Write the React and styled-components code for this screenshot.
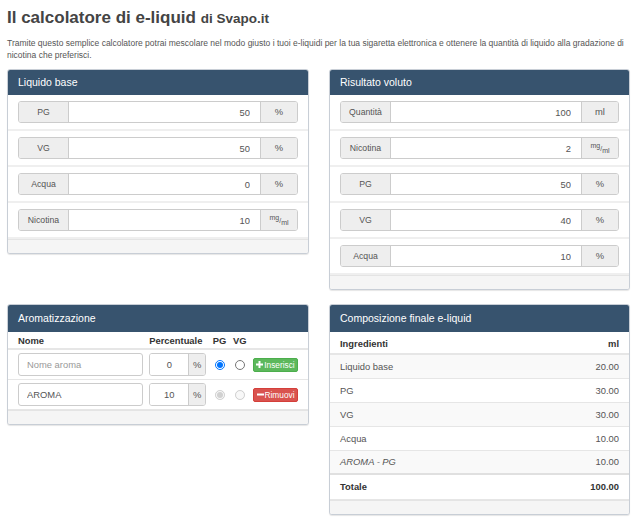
import React from "react";
import styled, { createGlobalStyle } from "styled-components";

const GlobalStyle = createGlobalStyle`
  html, body {
    margin: 0;
    padding: 0;
    background: #fff;
  }
  body {
    font-family: "Liberation Sans", Arial, sans-serif;
    font-size: 9.4px;
    line-height: 1.42857;
    color: #555;
  }
  * {
    box-sizing: border-box;
  }
`;

const Page = styled.div`
  padding: 8px 10px 8px 7px;
`;

const Title = styled.h2`
  margin: 0 0 8px 0;
  font-size: 17px;
  line-height: 20px;
  font-weight: bold;
  color: #444;

  small {
    font-size: 13.5px;
    color: #444;
  }
`;

const Intro = styled.p`
  margin: 0 0 8px 0;
  font-size: 8.5px;
  line-height: 12px;
  color: #555;
`;

const Grid = styled.div`
  display: grid;
  grid-template-columns: 302px 301px;
  column-gap: 20px;
  row-gap: 14px;
  align-items: start;
`;

const Panel = styled.div`
  border: 1px solid #c8ced6;
  border-radius: 3px;
  background: #fff;
  box-shadow: 0 1px 1px rgba(0, 0, 0, 0.1);
  overflow: hidden;
`;

const PanelHeading = styled.div`
  background: #37536e;
  color: #fff;
  font-size: 10.5px;
  height: ${(p) => (p.$tall ? "27px" : "25px")};
  display: flex;
  align-items: center;
  padding: 0 10px;
`;

const PanelFooter = styled.div`
  height: 14px;
  background: #f5f5f5;
  border-top: 1px solid #e4e4e4;
`;

const Row = styled.div`
  padding: 6px 10px;
  border-bottom: 2px solid #efefef;
`;

const InputGroup = styled.div`
  display: flex;
  height: 22px;
  border: 1px solid #ccc;
  border-radius: 3px;
  overflow: hidden;
`;

const Addon = styled.span`
  flex: 0 0 ${(p) => p.$w}px;
  display: flex;
  align-items: center;
  justify-content: center;
  background: #eee;
  color: #555;
  font-size: ${(p) => (p.$small ? "8.7px" : "9.4px")};
  border-left: ${(p) => (p.$right ? "1px solid #ccc" : "none")};
  border-right: ${(p) => (p.$right ? "none" : "1px solid #ccc")};
`;

const Unit = styled.span`
  font-size: 7px;
  line-height: 1;
  white-space: nowrap;

  sup {
    vertical-align: 3px;
    font-size: 7px;
  }
  sub {
    vertical-align: -2px;
    font-size: 7px;
  }
`;

const ValueField = styled.input`
  flex: 1;
  min-width: 0;
  border: none;
  outline: none;
  padding: 0 10px;
  font-family: inherit;
  font-size: 9.4px;
  color: #555;
  text-align: ${(p) => p.$align || "right"};
  background: #fff;
`;

const AromaGrid = styled.div`
  display: grid;
  grid-template-columns: 125px 57px 14px 14px 45px;
  justify-content: space-between;
  align-items: center;
  padding: ${(p) => (p.$head ? "1px 10px 0" : "3px 10px")};
  height: ${(p) => (p.$head ? "18px" : "30px")};
  border-bottom: ${(p) => (p.$head ? "2px solid #e6e6e6" : "1px solid #e6e6e6")};
  &:last-of-type {
    border-bottom: none;
  }
`;

const HeadLabel = styled.span`
  font-weight: bold;
  color: #333;
  white-space: nowrap;
  justify-self: ${(p) => (p.$center ? "center" : "start")};
`;

const NameField = styled.input`
  width: 125px;
  height: 23px;
  border: 1px solid #ccc;
  border-radius: 3px;
  padding: 0 8px;
  font-family: inherit;
  font-size: 9.4px;
  color: #555;
  outline: none;

  &::placeholder {
    color: #999;
  }
`;

const SmallGroup = styled(InputGroup)`
  width: 57px;
  height: 23px;
`;

const Radio = styled.input.attrs({ type: "radio" })`
  width: 10px;
  height: 10px;
  margin: 0;
  justify-self: center;
`;

const Button = styled.button`
  display: inline-flex;
  align-items: center;
  justify-content: center;
  gap: 1px;
  width: 45px;
  height: 14px;
  padding: 0 1px;
  border: 1px solid ${(p) => (p.$danger ? "#d43f3a" : "#4cae4c")};
  border-radius: 2px;
  background: ${(p) => (p.$danger ? "#d9534f" : "#5cb85c")};
  color: #fff;
  font-family: inherit;
  font-size: 8.3px;
  white-space: nowrap;
  cursor: pointer;

  svg {
    width: 7px;
    height: 7px;
    flex: 0 0 7px;
  }
`;

const ResultTable = styled.table`
  width: 100%;
  border-collapse: collapse;

  th,
  td {
    padding: 0 10px;
    height: 24px;
    line-height: 13px;
  }
  thead th {
    border-bottom: 2px solid #e6e6e6;
    color: #333;
    height: 22px;
    padding-top: 1px;
  }
  tbody tr {
    border-top: 1px solid #e6e6e6;
  }
  tbody tr:first-child {
    border-top: none;
  }
  tbody tr:nth-child(odd) {
    background: #f9f9f9;
  }
`;

const Cell = styled.td`
  text-align: ${(p) => (p.$num ? "right" : "left")};
  font-style: ${(p) => (p.$italic ? "italic" : "normal")};
`;

const HeadCell = styled.th`
  text-align: ${(p) => (p.$num ? "right" : "left")};
  font-weight: bold;
`;

const TotalRow = styled.tr`
  && {
    background: #fff;
    border-top: 2px solid #e0e0e0;
    border-bottom: 1px solid #e6e6e6;
  }
  && td {
    font-weight: bold;
    color: #333;
    height: 25px;
  }
`;

const Plus = () => (
  <svg viewBox="0 0 10 10">
    <path d="M3.6 0h2.8v3.6H10v2.8H6.4V10H3.6V6.4H0V3.6h3.6z" fill="#fff" />
  </svg>
);

const Minus = () => (
  <svg viewBox="0 0 10 10">
    <path d="M0 3.6h10v2.8H0z" fill="#fff" />
  </svg>
);

const MgMl = () => (
  <Unit>
    <sup>mg</sup>/<sub>ml</sub>
  </Unit>
);

function Field({ label, value, unit }) {
  return (
    <Row>
      <InputGroup>
        <Addon $w={50} $small>
          {label}
        </Addon>
        <ValueField defaultValue={value} />
        <Addon $w={37} $right>
          {unit}
        </Addon>
      </InputGroup>
    </Row>
  );
}

function AromaLine({ name, placeholder, pct, disabled, action }) {
  const group = placeholder ? "new" : "saved";
  return (
    <AromaGrid>
      <NameField placeholder={placeholder} defaultValue={name} />
      <SmallGroup>
        <ValueField defaultValue={pct} $align="center" />
        <Addon $w={17} $right>
          %
        </Addon>
      </SmallGroup>
      <Radio name={group} defaultChecked disabled={disabled} />
      <Radio name={group} disabled={disabled} />
      {action === "add" ? (
        <Button>
          <Plus />
          Inserisci
        </Button>
      ) : (
        <Button $danger>
          <Minus />
          Rimuovi
        </Button>
      )}
    </AromaGrid>
  );
}

const base = [
  { label: "PG", value: "50", unit: "%" },
  { label: "VG", value: "50", unit: "%" },
  { label: "Acqua", value: "0", unit: "%" },
  { label: "Nicotina", value: "10", unit: <MgMl /> },
];

const target = [
  { label: "Quantità", value: "100", unit: "ml" },
  { label: "Nicotina", value: "2", unit: <MgMl /> },
  { label: "PG", value: "50", unit: "%" },
  { label: "VG", value: "40", unit: "%" },
  { label: "Acqua", value: "10", unit: "%" },
];

const result = [
  { name: "Liquido base", ml: "20.00" },
  { name: "PG", ml: "30.00" },
  { name: "VG", ml: "30.00" },
  { name: "Acqua", ml: "10.00" },
  { name: "AROMA - PG", ml: "10.00", italic: true },
];

export default function App() {
  return (
    <>
      <GlobalStyle />
      <Page>
        <Title>
          Il calcolatore di e-liquid <small>di Svapo.it</small>
        </Title>
        <Intro>
          Tramite questo semplice calcolatore potrai mescolare nel modo giusto i
          tuoi e-liquidi per la tua sigaretta elettronica e ottenere la quantità
          di liquido alla gradazione di nicotina che preferisci.
        </Intro>
        <Grid>
          <Panel>
            <PanelHeading>Liquido base</PanelHeading>
            {base.map((f) => (
              <Field key={f.label} {...f} />
            ))}
            <PanelFooter />
          </Panel>

          <Panel>
            <PanelHeading>Risultato voluto</PanelHeading>
            {target.map((f) => (
              <Field key={f.label} {...f} />
            ))}
            <PanelFooter />
          </Panel>

          <Panel>
            <PanelHeading $tall>Aromatizzazione</PanelHeading>
            <AromaGrid $head>
              <HeadLabel>Nome</HeadLabel>
              <HeadLabel>Percentuale</HeadLabel>
              <HeadLabel $center>PG</HeadLabel>
              <HeadLabel $center>VG</HeadLabel>
              <span />
            </AromaGrid>
            <AromaLine placeholder="Nome aroma" pct="0" action="add" />
            <AromaLine name="AROMA" pct="10" disabled action="remove" />
            <PanelFooter />
          </Panel>

          <Panel>
            <PanelHeading $tall>Composizione finale e-liquid</PanelHeading>
            <ResultTable>
              <thead>
                <tr>
                  <HeadCell>Ingredienti</HeadCell>
                  <HeadCell $num>ml</HeadCell>
                </tr>
              </thead>
              <tbody>
                {result.map((r) => (
                  <tr key={r.name}>
                    <Cell $italic={r.italic}>{r.name}</Cell>
                    <Cell $num>{r.ml}</Cell>
                  </tr>
                ))}
                <TotalRow>
                  <Cell>Totale</Cell>
                  <Cell $num>100.00</Cell>
                </TotalRow>
              </tbody>
            </ResultTable>
            <PanelFooter />
          </Panel>
        </Grid>
      </Page>
    </>
  );
}
